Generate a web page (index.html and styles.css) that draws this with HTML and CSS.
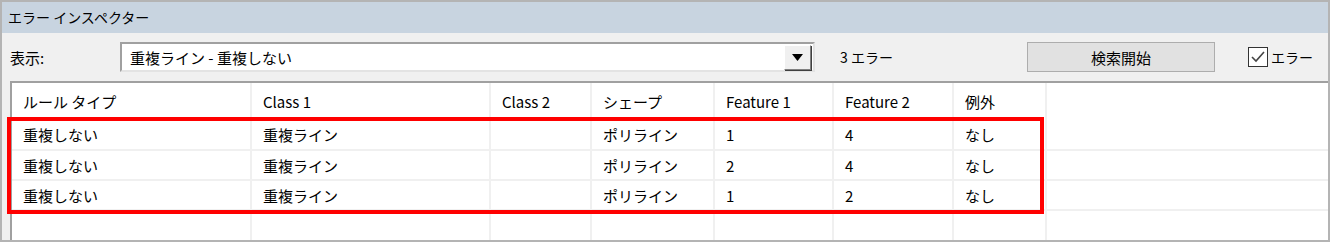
FILE: index.html
```html
<!DOCTYPE html>
<html lang="ja">
<head>
  <meta charset="UTF-8" />
  <title>エラー インスペクター</title>
  <link rel="stylesheet" href="styles.css">
</head>
<body>
  <div class="window">
    <div class="titlebar">エラー インスペクター</div>

    <div class="toolbar">
      <span class="label">表示:</span>
      <div class="combo">
        <span class="combo-text">重複ライン - 重複しない</span>
        <span class="combo-btn">
          <svg width="11" height="7" viewBox="0 0 11 7"><path d="M0 0h11L5.5 7z" fill="#000"/></svg>
        </span>
      </div>
      <span class="count">3 エラー</span>
      <button class="search">検索開始</button>
      <label class="check">
        <span class="box">
          <svg width="16" height="14" viewBox="0 0 16 14"><path d="M2 7l4 4 8-9" fill="none" stroke="#444" stroke-width="1.6"/></svg>
        </span>
        エラー
      </label>
    </div>

    <div class="grid-wrap">
      <table class="grid">
        <colgroup>
          <col class="c-rule"><col class="c-class1"><col class="c-class2"><col class="c-shape">
          <col class="c-f1"><col class="c-f2"><col class="c-exc"><col>
        </colgroup>
        <thead>
          <tr>
            <th>ルール タイプ</th><th>Class 1</th><th>Class 2</th><th>シェープ</th>
            <th>Feature 1</th><th>Feature 2</th><th>例外</th><th></th>
          </tr>
        </thead>
        <tbody>
          <tr>
            <td>重複しない</td><td>重複ライン</td><td></td><td>ポリライン</td>
            <td>1</td><td>4</td><td>なし</td><td></td>
          </tr>
          <tr>
            <td>重複しない</td><td>重複ライン</td><td></td><td>ポリライン</td>
            <td>2</td><td>4</td><td>なし</td><td></td>
          </tr>
          <tr>
            <td>重複しない</td><td>重複ライン</td><td></td><td>ポリライン</td>
            <td>1</td><td>2</td><td>なし</td><td></td>
          </tr>
          <tr class="empty">
            <td></td><td></td><td></td><td></td><td></td><td></td><td></td><td></td>
          </tr>
        </tbody>
      </table>
      <div class="highlight"></div>
    </div>
  </div>
</body>
</html>
```

FILE: styles.css
```css
* {
  box-sizing: border-box;
}
body {
  margin: 0;
  font-family: "Noto Sans CJK JP", "Noto Sans", sans-serif;
  color: #000;
  background: #fff;
}
.window {
  width: 1330px;
  height: 242px;
  border: 2px solid #b4b4b4;
  background: #f0f0f0;
  display: flex;
  flex-direction: column;
  overflow: hidden;
}

.titlebar {
  height: 31px;
  background: #c8d4e0;
  font-size: 14px;
  line-height: 31px;
  padding-left: 6px;
  flex-shrink: 0;
}

.toolbar {
  height: 48px;
  display: flex;
  align-items: center;
  padding-left: 8px;
  flex-shrink: 0;
  font-size: 14px;
}
.label {
  width: 110px;
  font-size: 15px;
}
.combo {
  width: 695px;
  height: 30px;
  background: #fff;
  border: 2px solid;
  border-color: #a0a0a0 #e3e3e3 #e3e3e3 #a0a0a0;
  display: flex;
  align-items: center;
  justify-content: space-between;
  padding: 0 2px 0 8px;
}
.combo-text {
  font-size: 15px;
}
.combo-btn {
  width: 27px;
  height: 25px;
  background: #f0f0f0;
  border: 1px solid;
  border-color: #fff #808080 #808080 #fff;
  box-shadow: 1px 1px 0 #404040;
  display: flex;
  align-items: center;
  justify-content: center;
}
.count {
  margin-left: 25px;
  width: 187px;
}
.search {
  width: 188px;
  height: 30px;
  background: #e1e1e1;
  border: 1px solid #adadad;
  font-family: inherit;
  font-size: 15px;
  color: #000;
  padding: 0;
}
.check {
  margin-left: 33px;
  display: flex;
  align-items: center;
  gap: 3px;
  font-size: 14px;
}
.check .box {
  width: 20px;
  height: 20px;
  border: 1px solid #333;
  background: #fff;
  display: flex;
  align-items: center;
  justify-content: center;
}

.grid-wrap {
  position: relative;
  flex: 1;
  margin-left: 8px;
  background: #fff;
  border-top: 2px solid #a0a0a0;
  border-left: 2px solid #a0a0a0;
}
.grid {
  border-collapse: collapse;
  table-layout: fixed;
  width: 100%;
  font-size: 15px;
}
.grid th,
.grid td {
  text-align: left;
  font-weight: normal;
  padding: 0 0 0 11px;
  height: 30px;
  border-right: 2px solid #f0f0f0;
  border-bottom: 2px solid #f0f0f0;
  white-space: nowrap;
}
.grid th {
  height: 37px;
  border-bottom: none;
}
.grid th:last-child,
.grid td:last-child {
  border-right: none;
}
.grid tr.empty td {
  border-bottom: none;
}
.c-rule { width: 239px; }
.c-class1 { width: 239px; }
.c-class2 { width: 101px; }
.c-shape { width: 123px; }
.c-f1 { width: 119px; }
.c-f2 { width: 120px; }
.c-exc { width: 93px; }

.highlight {
  position: absolute;
  left: -5px;
  top: 34px;
  width: 1037px;
  height: 97px;
  border: 4px solid #f00;
  pointer-events: none;
}
```
